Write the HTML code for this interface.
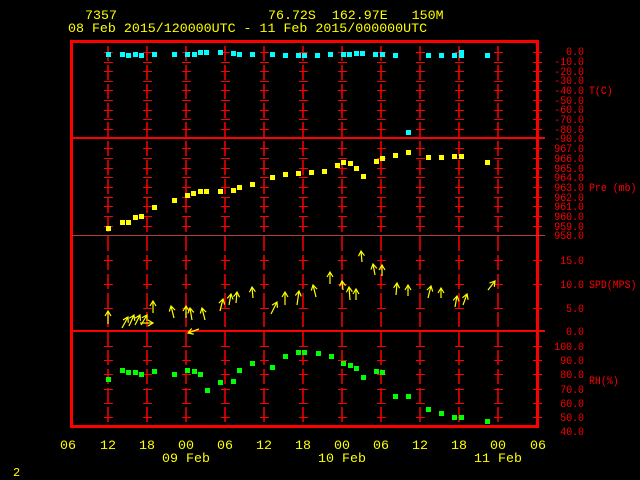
<!DOCTYPE html>
<html><head><style>
html,body{margin:0;padding:0;background:#000;}
body{width:640px;height:480px;overflow:hidden;}
svg{display:block}
text{font-family:"Liberation Mono",monospace;white-space:pre;}
.y{fill:#ffff00;font-size:13.3px}
.r{fill:#ff0000;font-size:11px;text-anchor:end}
.rl{fill:#ff0000;font-size:11px}
</style></head><body>
<svg width="640" height="480" viewBox="0 0 640 480" xmlns="http://www.w3.org/2000/svg" xml:space="preserve">
<defs>
<marker id="ah" markerWidth="8" markerHeight="8" refX="6" refY="4" orient="auto" markerUnits="userSpaceOnUse">
<path d="M1,1 L6,4 L1,7" fill="none" stroke="#ffff00" stroke-width="1.2"/>
</marker>
<g id="vl" stroke="#ff0000" stroke-width="1.5">
<line x1="0" y1="46" x2="0" y2="424" stroke-dasharray="15,4"/>
<path d="M-4,52.5h9M-4,62.5h9M-4,71.5h9M-4,81.5h9M-4,90.5h9M-4,100.5h9M-4,110.5h9M-4,119.5h9M-4,129.5h9M-4,148.5h9M-4,158.5h9M-4,168.5h9M-4,177.5h9M-4,187.5h9M-4,197.5h9M-4,206.5h9M-4,216.5h9M-4,226.5h9M-4,260.5h9M-4,284.5h9M-4,308.5h9M-4,346.5h9M-4,360.5h9M-4,374.5h9M-4,389.5h9M-4,403.5h9M-4,417.5h9" stroke-width="1"/>
</g>
</defs>
<text class="y" x="85" y="19">7357</text>
<text class="y" x="268" y="19">76.72S  162.97E   150M</text>
<text class="y" x="68" y="32">08 Feb 2015/120000UTC - 11 Feb 2015/000000UTC</text>

<use href="#vl" x="108"/><use href="#vl" x="147"/><use href="#vl" x="186"/><use href="#vl" x="225"/>
<use href="#vl" x="264"/><use href="#vl" x="303"/><use href="#vl" x="342"/><use href="#vl" x="381"/>
<use href="#vl" x="420"/><use href="#vl" x="459"/><use href="#vl" x="498"/><use href="#vl" x="537"/>

<g stroke="#ff0000" shape-rendering="crispEdges">
<rect x="71.5" y="41.5" width="466" height="385" fill="none" stroke-width="3"/>
<line x1="72" y1="138" x2="545" y2="138" stroke-width="2"/>
<line x1="72" y1="235.5" x2="545" y2="235.5" stroke-width="1" stroke="#b04040"/>
<line x1="72" y1="331" x2="545" y2="331" stroke-width="2"/>
</g>

<g class="r" transform="translate(584,0) scale(0.9,1) translate(-584,0)">
<text x="584" y="55">0.0</text><text x="584" y="65">-10.0</text><text x="584" y="75">-20.0</text>
<text x="584" y="84">-30.0</text><text x="584" y="94">-40.0</text><text x="584" y="104">-50.0</text>
<text x="584" y="113">-60.0</text><text x="584" y="123">-70.0</text><text x="584" y="133">-80.0</text>
<text x="584" y="142">-90.0</text>
<text x="584" y="152">967.0</text><text x="584" y="162">966.0</text><text x="584" y="172">965.0</text>
<text x="584" y="181">964.0</text><text x="584" y="191">963.0</text><text x="584" y="201">962.0</text>
<text x="584" y="210">961.0</text><text x="584" y="220">960.0</text><text x="584" y="230">959.0</text>
<text x="584" y="239">958.0</text>
<text x="584" y="264">15.0</text><text x="584" y="288">10.0</text><text x="584" y="312">5.0</text>
<text x="584" y="335">0.0</text>
<text x="584" y="350">100.0</text><text x="584" y="364">90.0</text><text x="584" y="378">80.0</text>
<text x="584" y="393">70.0</text><text x="584" y="407">60.0</text><text x="584" y="421">50.0</text>
<text x="584" y="435">40.0</text>
</g>
<g class="rl" transform="translate(589,0) scale(0.9,1) translate(-589,0)">
<text x="589" y="94">T(C)</text>
<text x="589" y="191">Pre (mb)</text>
<text x="589" y="288">SPD(MPS)</text>
<text x="589" y="384">RH(%)</text>
</g>

<g class="y" text-anchor="middle">
<text x="68" y="449">06</text><text x="108" y="449">12</text><text x="147" y="449">18</text>
<text x="186" y="449">00</text><text x="225" y="449">06</text><text x="264" y="449">12</text>
<text x="303" y="449">18</text><text x="342" y="449">00</text><text x="381" y="449">06</text>
<text x="420" y="449">12</text><text x="459" y="449">18</text><text x="498" y="449">00</text>
<text x="538" y="449">06</text>
<text x="186" y="462">09 Feb</text><text x="342" y="462">10 Feb</text><text x="498" y="462">11 Feb</text>
</g>
<text class="y" x="13" y="476" style="font-size:12px">2</text>

<g fill="#00ffff">
<rect x="106" y="52" width="5" height="5"/><rect x="120" y="52" width="5" height="5"/><rect x="126" y="53" width="5" height="5"/>
<rect x="133" y="52" width="5" height="5"/><rect x="139" y="53" width="5" height="5"/><rect x="152" y="52" width="5" height="5"/>
<rect x="172" y="52" width="5" height="5"/><rect x="185" y="52" width="5" height="5"/><rect x="192" y="52" width="5" height="5"/>
<rect x="198" y="50" width="5" height="5"/><rect x="204" y="50" width="5" height="5"/><rect x="218" y="50" width="5" height="5"/>
<rect x="231" y="51" width="5" height="5"/><rect x="237" y="52" width="5" height="5"/><rect x="250" y="52" width="5" height="5"/>
<rect x="270" y="52" width="5" height="5"/><rect x="283" y="53" width="5" height="5"/><rect x="296" y="53" width="5" height="5"/>
<rect x="302" y="53" width="5" height="5"/><rect x="315" y="53" width="5" height="5"/><rect x="328" y="52" width="5" height="5"/>
<rect x="341" y="52" width="5" height="5"/><rect x="347" y="52" width="5" height="5"/><rect x="354" y="51" width="5" height="5"/>
<rect x="360" y="51" width="5" height="5"/><rect x="373" y="52" width="5" height="5"/><rect x="380" y="52" width="5" height="5"/>
<rect x="393" y="53" width="5" height="5"/><rect x="406" y="130" width="5" height="5"/><rect x="426" y="53" width="5" height="5"/>
<rect x="439" y="53" width="5" height="5"/><rect x="452" y="53" width="5" height="5"/><rect x="459" y="50" width="5" height="8"/>
<rect x="485" y="53" width="5" height="5"/>
</g>
<g fill="#ffff00">
<rect x="106" y="226" width="5" height="5"/><rect x="120" y="220" width="5" height="5"/><rect x="126" y="220" width="5" height="5"/>
<rect x="133" y="215" width="5" height="5"/><rect x="139" y="214" width="5" height="5"/><rect x="152" y="205" width="5" height="5"/>
<rect x="172" y="198" width="5" height="5"/><rect x="185" y="193" width="5" height="5"/><rect x="191" y="191" width="5" height="5"/>
<rect x="198" y="189" width="5" height="5"/><rect x="204" y="189" width="5" height="5"/><rect x="218" y="189" width="5" height="5"/>
<rect x="231" y="188" width="5" height="5"/><rect x="237" y="185" width="5" height="5"/><rect x="250" y="182" width="5" height="5"/>
<rect x="270" y="175" width="5" height="5"/><rect x="283" y="172" width="5" height="5"/><rect x="296" y="171" width="5" height="5"/>
<rect x="309" y="170" width="5" height="5"/><rect x="322" y="169" width="5" height="5"/><rect x="335" y="163" width="5" height="5"/>
<rect x="341" y="160" width="5" height="5"/><rect x="348" y="161" width="5" height="5"/><rect x="354" y="166" width="5" height="5"/>
<rect x="361" y="174" width="5" height="5"/><rect x="374" y="159" width="5" height="5"/><rect x="380" y="156" width="5" height="5"/>
<rect x="393" y="153" width="5" height="5"/><rect x="406" y="150" width="5" height="5"/><rect x="426" y="155" width="5" height="5"/>
<rect x="439" y="155" width="5" height="5"/><rect x="452" y="154" width="5" height="5"/><rect x="459" y="154" width="5" height="5"/>
<rect x="485" y="160" width="5" height="5"/>
</g>
<g fill="#00ff00">
<rect x="106" y="377" width="5" height="5"/><rect x="120" y="368" width="5" height="5"/><rect x="126" y="370" width="5" height="5"/>
<rect x="133" y="370" width="5" height="5"/><rect x="139" y="372" width="5" height="5"/><rect x="152" y="369" width="5" height="5"/>
<rect x="172" y="372" width="5" height="5"/><rect x="185" y="368" width="5" height="5"/><rect x="192" y="369" width="5" height="5"/>
<rect x="198" y="372" width="5" height="5"/><rect x="205" y="388" width="5" height="5"/><rect x="218" y="380" width="5" height="5"/>
<rect x="231" y="379" width="5" height="5"/><rect x="237" y="368" width="5" height="5"/><rect x="250" y="361" width="5" height="5"/>
<rect x="270" y="365" width="5" height="5"/><rect x="283" y="354" width="5" height="5"/><rect x="296" y="350" width="5" height="5"/>
<rect x="302" y="350" width="5" height="5"/><rect x="316" y="351" width="5" height="5"/><rect x="329" y="354" width="5" height="5"/>
<rect x="341" y="361" width="5" height="5"/><rect x="348" y="363" width="5" height="5"/><rect x="354" y="366" width="5" height="5"/>
<rect x="361" y="375" width="5" height="5"/><rect x="374" y="369" width="5" height="5"/><rect x="380" y="370" width="5" height="5"/>
<rect x="393" y="394" width="5" height="5"/><rect x="406" y="394" width="5" height="5"/><rect x="426" y="407" width="5" height="5"/>
<rect x="439" y="411" width="5" height="5"/><rect x="452" y="415" width="5" height="5"/><rect x="459" y="415" width="5" height="5"/>
<rect x="485" y="419" width="5" height="5"/>
</g>

<g stroke="#ffff00" stroke-width="1.2" fill="none" marker-end="url(#ah)">
<line x1="108" y1="324" x2="108" y2="311"/><line x1="122" y1="328" x2="128" y2="317"/>
<line x1="129" y1="326" x2="134" y2="315"/><line x1="135" y1="325" x2="140" y2="315"/>
<line x1="141" y1="325" x2="147" y2="315"/><line x1="140" y1="323" x2="153" y2="323"/>
<line x1="153" y1="313" x2="153" y2="301"/><line x1="174" y1="318" x2="171" y2="306"/>
<line x1="186" y1="318" x2="186" y2="306"/><line x1="192" y1="320" x2="190" y2="308"/>
<line x1="205" y1="320" x2="202" y2="308"/><line x1="220" y1="311" x2="223" y2="299"/>
<line x1="229" y1="305" x2="231" y2="294"/><line x1="236" y1="303" x2="237" y2="292"/>
<line x1="253" y1="298" x2="252" y2="287"/><line x1="271" y1="314" x2="277" y2="302"/>
<line x1="285" y1="305" x2="285" y2="292"/><line x1="297" y1="305" x2="299" y2="291"/>
<line x1="316" y1="297" x2="313" y2="285"/><line x1="330" y1="284" x2="330" y2="272"/>
<line x1="343" y1="290" x2="342" y2="281"/><line x1="350" y1="300" x2="349" y2="287"/>
<line x1="356" y1="300" x2="356" y2="289"/><line x1="362" y1="262" x2="361" y2="251"/>
<line x1="375" y1="275" x2="373" y2="264"/><line x1="382" y1="276" x2="382" y2="265"/>
<line x1="396" y1="295" x2="397" y2="283"/><line x1="408" y1="296" x2="408" y2="285"/>
<line x1="428" y1="298" x2="431" y2="286"/><line x1="441" y1="298" x2="441" y2="288"/>
<line x1="455" y1="307" x2="457" y2="296"/><line x1="463" y1="305" x2="467" y2="294"/>
<line x1="488" y1="290" x2="495" y2="281"/><line x1="199" y1="329" x2="188" y2="333"/>
</g>
</svg>
</body></html>
